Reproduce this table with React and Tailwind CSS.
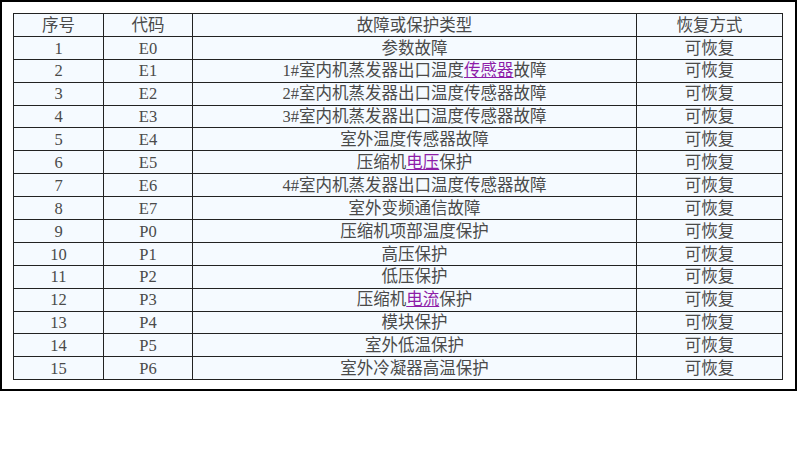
const rows = [
  ['1', 'E0', [['参数故障']]],
  ['2', 'E1', [['1#室内机蒸发器出口温度'], ['传感器', true], ['故障']]],
  ['3', 'E2', [['2#室内机蒸发器出口温度传感器故障']]],
  ['4', 'E3', [['3#室内机蒸发器出口温度传感器故障']]],
  ['5', 'E4', [['室外温度传感器故障']]],
  ['6', 'E5', [['压缩机'], ['电压', true], ['保护']]],
  ['7', 'E6', [['4#室内机蒸发器出口温度传感器故障']]],
  ['8', 'E7', [['室外变频通信故障']]],
  ['9', 'P0', [['压缩机项部温度保护']]],
  ['10', 'P1', [['高压保护']]],
  ['11', 'P2', [['低压保护']]],
  ['12', 'P3', [['压缩机'], ['电流', true], ['保护']]],
  ['13', 'P4', [['模块保护']]],
  ['14', 'P5', [['室外低温保护']]],
  ['15', 'P6', [['室外冷凝器高温保护']]],
]

const cell = 'border border-[#222] text-center p-0 pt-[2px] leading-none'

export default function App() {
  return (
    <div
      className="h-[450px] w-[800px] bg-white text-[16.5px] text-[#4a4a4a]"
      style={{ fontFamily: '"Liberation Serif", "Noto Sans CJK SC", serif' }}
    >
      <div className="h-[391px] w-[797px] border-2 border-black pl-[11px] pt-[11px]">
        <table className="w-[769px] table-fixed border-collapse bg-[#f5faff]">
          <colgroup>
            <col className="w-[90px]" />
            <col className="w-[89px]" />
            <col className="w-[444px]" />
            <col className="w-[146px]" />
          </colgroup>
          <tbody>
            <tr className="h-[22.9px]">
              <td className={cell}>序号</td>
              <td className={cell}>代码</td>
              <td className={cell}>故障或保护类型</td>
              <td className={cell}>恢复方式</td>
            </tr>
            {rows.map(([n, code, parts]) => (
              <tr key={n} className="h-[22.9px]">
                <td className={cell}>{n}</td>
                <td className={cell}>{code}</td>
                <td className={cell}>
                  {parts.map(([t, link], i) =>
                    link ? (
                      <span key={i} className="text-[#8e1ea8] underline">
                        {t}
                      </span>
                    ) : (
                      <span key={i}>{t}</span>
                    )
                  )}
                </td>
                <td className={cell}>可恢复</td>
              </tr>
            ))}
          </tbody>
        </table>
      </div>
    </div>
  )
}
